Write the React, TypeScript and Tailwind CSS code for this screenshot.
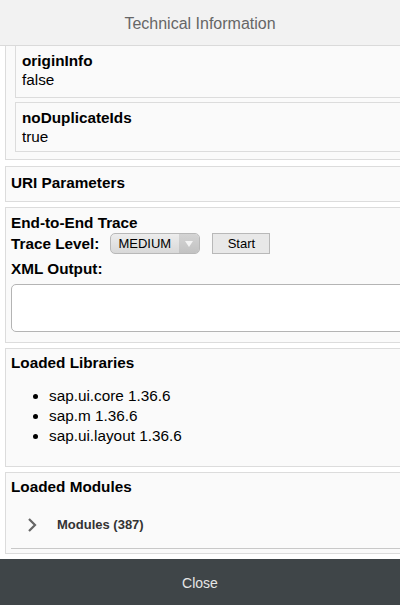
import React from 'react';

const font = "font-['Liberation_Sans',Arial,sans-serif]";

const Panel: React.FC<{ className?: string; children: React.ReactNode }> = ({ className = '', children }) => (
  <div className={`ml-[5px] border border-r-0 border-[#dcdcdc] bg-[#fafafa] ${className}`}>{children}</div>
);

const Prop: React.FC<{ name: string; value: string; className?: string }> = ({ name, value, className = '' }) => (
  <div className={`ml-[9px] border border-r-0 border-[#dcdcdc] bg-[#fafafa] pl-[6px] ${className}`}>
    <div className="text-[15.3px] font-bold leading-[19px] text-black">{name}</div>
    <div className="text-[15.3px] leading-[19px] text-black">{value}</div>
  </div>
);

export default function App() {
  const libs = ['sap.ui.core 1.36.6', 'sap.m 1.36.6', 'sap.ui.layout 1.36.6'];

  return (
    <div className={`${font} flex h-[605px] w-[400px] flex-col overflow-hidden bg-white`}>
      {/* Header */}
      <div className="flex h-[46px] shrink-0 items-center justify-center border-b border-[#dadada] bg-[#f2f2f2] pt-[3px]">
        <span className="text-[16px] text-[#666]">Technical Information</span>
      </div>

      {/* Scrolled content */}
      <div className="flex-1 overflow-hidden">
        <div className="w-[420px]">
          <Panel className="-mt-[2px] border-t-0 pb-[7px]">
            <Prop name="originInfo" value="false" className="border-t-0 pt-[7px] pb-[8px]" />
            <Prop name="noDuplicateIds" value="true" className="mt-[4px] pt-[5px] pb-[5px]" />
          </Panel>

          <Panel className="mt-[6px] h-[36px] pl-[5px]">
            <div className="pt-[6px] text-[15.3px] font-bold leading-[19px] text-black">URI Parameters</div>
          </Panel>

          <Panel className="mt-[5px] pt-[5px] pb-[10px] pl-[5px]">
            <div className="text-[15.3px] font-bold leading-[19px] text-black">End-to-End Trace</div>
            <div className="mt-[1px] flex items-center">
              <span className="text-[15.3px] font-bold leading-[19px] text-black">Trace Level:</span>
              <div className="ml-[11px] flex h-[21px] w-[90px] items-center overflow-hidden rounded-[5px] border border-[#b8b8b8] bg-gradient-to-b from-[#ededed] to-[#d8d8d8]">
                <span className="flex-1 pl-[7px] text-[13px] text-black">MEDIUM</span>
                <div className="flex h-full w-[20px] items-center justify-center bg-gradient-to-b from-[#d4d4d4] to-[#c2c2c2]">
                  <svg width="8" height="6" viewBox="0 0 8 6">
                    <path d="M0 0 H8 L4 6 Z" fill="#f4f4f4" />
                  </svg>
                </div>
              </div>
              <button className="ml-[12px] flex h-[21px] w-[58px] items-center justify-center border border-[#b8b8b8] bg-[#e8e8e8] text-[13px] text-black">
                Start
              </button>
            </div>
            <div className="mt-[5px] text-[15.3px] font-bold leading-[19px] text-black">XML Output:</div>
            <div className="mt-[6px] h-[48px] rounded-[5px] border border-[#b4b4b4] bg-white" />
          </Panel>

          <Panel className="mt-[5px] h-[119px] pt-[4px] pl-[5px]">
            <div className="text-[15.3px] font-bold leading-[19px] text-black">Loaded Libraries</div>
            <ul className="mt-[14px] list-disc pl-[38px] text-[15.3px] leading-[20px] text-black">
              {libs.map(l => (
                <li key={l}>{l}</li>
              ))}
            </ul>
          </Panel>

          <Panel className="mt-[5px] h-[82px] pt-[4px] pl-[5px]">
            <div className="text-[15.3px] font-bold leading-[19px] text-black">Loaded Modules</div>
            <div className="mt-[21px] flex h-[15px] items-center pl-[16px]">
              <svg width="10" height="14" viewBox="0 0 10 14">
                <path d="M2 1 L8 7 L2 13" fill="none" stroke="#666" strokeWidth="2.2" />
              </svg>
              <span className="ml-[20px] text-[13px] font-bold text-[#333]">Modules (387)</span>
            </div>
            <div className="mt-[16px] border-t border-[#c8c8c8]" />
          </Panel>
        </div>
      </div>

      {/* Footer */}
      <div className="flex h-[46px] shrink-0 items-center justify-center bg-[#3f4548] pt-[2px]">
        <span className="text-[14px] text-[#e6e6e6]">Close</span>
      </div>
    </div>
  );
}
